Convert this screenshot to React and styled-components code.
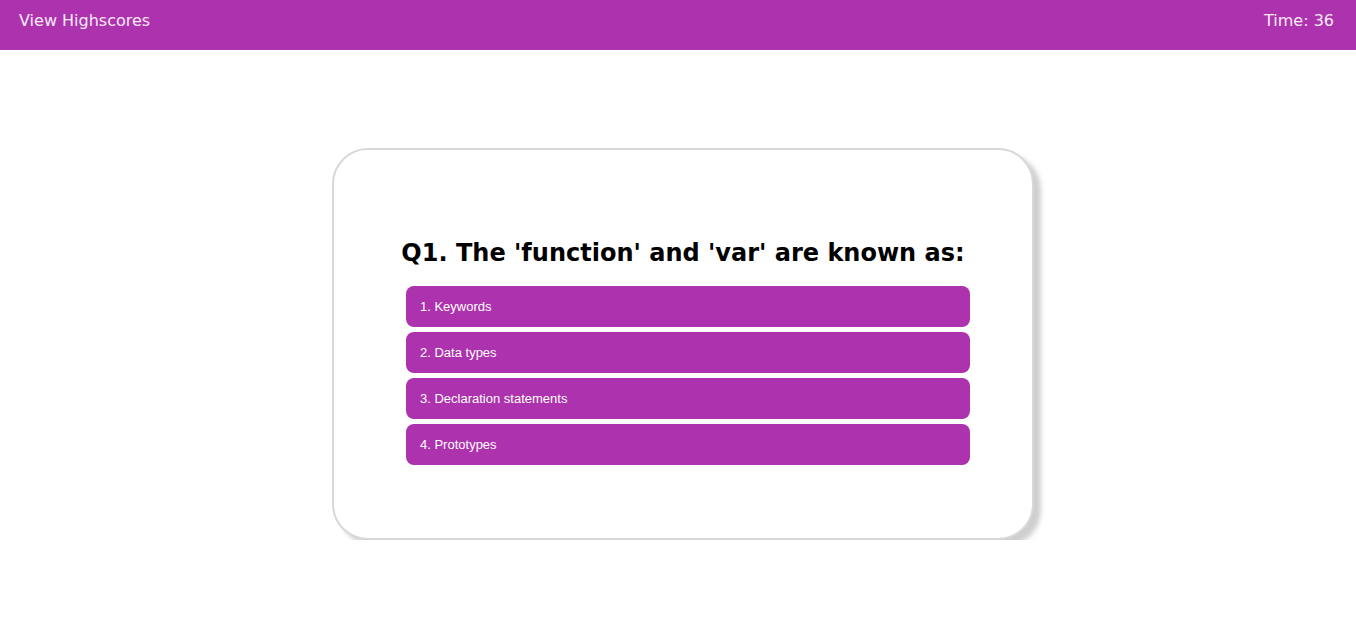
import React from "react";
import styled, { createGlobalStyle } from "styled-components";

const GlobalStyle = createGlobalStyle`
  body {
    margin: 0;
    background: #ffffff;
    font-family: "DejaVu Sans", Verdana, sans-serif;
  }
`;

const Header = styled.header`
  height: 50px;
  background-color: #ad32ad;
  color: #fbeafb;
  display: flex;
  justify-content: space-between;
  align-items: flex-start;
  padding: 11px 22px 0 19px;
  box-sizing: border-box;
  font-size: 16px;
`;

const HeaderLink = styled.a`
  color: inherit;
  text-decoration: none;
  cursor: pointer;
`;

const Timer = styled.span``;

const Stage = styled.main`
  padding-left: 10px;
`;

const Card = styled.section`
  box-sizing: border-box;
  width: 702px;
  height: 392px;
  margin: 98px auto 0;
  border: 2px solid #d8d8d8;
  border-radius: 36px;
  background: #ffffff;
  box-shadow: 7px 6px 5px #cfcfcf;
  padding-top: 89px;
`;

const Question = styled.h2`
  margin: 0 0 19px;
  font-size: 24px;
  line-height: 28px;
  font-weight: bold;
  text-align: center;
  color: #000000;
`;

const Options = styled.div`
  display: flex;
  flex-direction: column;
  gap: 5px;
  width: 564px;
  margin-left: 72px;
`;

const Option = styled.button`
  height: 41px;
  border: none;
  border-radius: 8px;
  background-color: #ad32ad;
  color: #ffffff;
  text-align: left;
  padding: 0 14px;
  font-family: "Liberation Sans", Arial, sans-serif;
  font-size: 13px;
  cursor: pointer;
`;

const choices = [
  "1. Keywords",
  "2. Data types",
  "3. Declaration statements",
  "4. Prototypes",
];

export default function App() {
  return (
    <>
      <GlobalStyle />
      <Header>
        <HeaderLink>View Highscores</HeaderLink>
        <Timer>Time: 36</Timer>
      </Header>
      <Stage>
        <Card>
          <Question>Q1. The 'function' and 'var' are known as:</Question>
          <Options>
            {choices.map((c) => (
              <Option key={c}>{c}</Option>
            ))}
          </Options>
        </Card>
      </Stage>
    </>
  );
}
